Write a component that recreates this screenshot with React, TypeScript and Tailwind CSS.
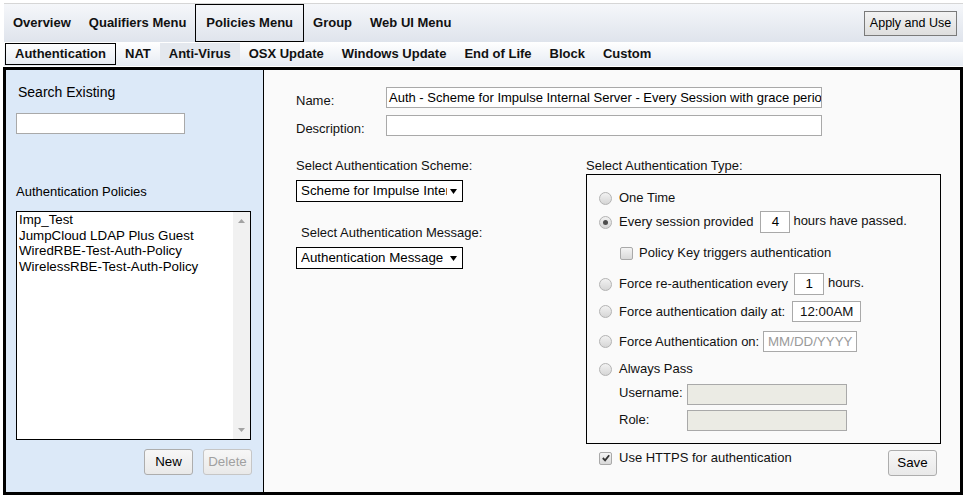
const topMenu = [
  { label: "Overview" },
  { label: "Qualifiers Menu" },
  { label: "Policies Menu", active: true },
  { label: "Group" },
  { label: "Web UI Menu" },
];

const subMenu = [
  { label: "Authentication", active: true },
  { label: "NAT" },
  { label: "Anti-Virus", hover: true },
  { label: "OSX Update" },
  { label: "Windows Update" },
  { label: "End of Life" },
  { label: "Block" },
  { label: "Custom" },
];

const policies = [
  "Imp_Test",
  "JumpCloud LDAP Plus Guest",
  "WiredRBE-Test-Auth-Policy",
  "WirelessRBE-Test-Auth-Policy",
];

function Radio({ checked }: { checked?: boolean }) {
  return (
    <span className="ml-[12px] w-[13px] h-[13px] shrink-0 rounded-full border border-[#b3b3b3] bg-linear-to-b from-[#f2f2f2] to-[#d6d6d6] flex items-center justify-center">
      {checked && <span className="w-[5px] h-[5px] rounded-full bg-[#4d4d4d]" />}
    </span>
  );
}

function Check({ checked }: { checked?: boolean }) {
  return (
    <span className="w-[13px] h-[13px] shrink-0 rounded-[2px] border border-[#a9a9a9] bg-linear-to-b from-[#f4f4f4] to-[#d9d9d9] flex items-center justify-center">
      {checked && (
        <svg viewBox="0 0 11 11" className="w-[10px] h-[10px]">
          <path d="M2 5.5 L4.5 8 L9 2.5" stroke="#333" strokeWidth="2" fill="none" />
        </svg>
      )}
    </span>
  );
}

function Arrow() {
  return (
    <svg viewBox="0 0 7 5" className="w-[7px] h-[5px] shrink-0">
      <path d="M0 0 L7 0 L3.5 5 Z" fill="#000" />
    </svg>
  );
}

function Field({ w, children, muted }: { w: string; children?: React.ReactNode; muted?: boolean }) {
  return (
    <div
      className={`${w} h-[21px] border border-[#a9a9a9] bg-white text-[13.33px] leading-[19px] text-center ${muted ? "text-[#9a9a9a]" : ""}`}
    >
      {children}
    </div>
  );
}

function Btn({ children, disabled }: { children: React.ReactNode; disabled?: boolean }) {
  return (
    <div
      className={`w-[49px] h-[26px] rounded-[3px] border bg-linear-to-b from-[#f7f7f7] to-[#e9e9e9] flex items-center justify-center text-[13.33px] ${
        disabled ? "border-[#c6c6c6] text-[#a0a0a0]" : "border-[#adadad] text-black"
      }`}
    >
      {children}
    </div>
  );
}

export default function App() {
  return (
    <div className="w-[968px] h-[501px] bg-white overflow-hidden pt-[3px] font-['Liberation_Sans',Arial,sans-serif] text-[13px] text-black">
      {/* main menu */}
      <div className="ml-[4px] w-[959px] h-[39px] border-t border-[#d6d6d6] bg-linear-to-b from-[#f5f7fa] to-[#dfe4ec] flex">
        {topMenu.map((m) => (
          <div
            key={m.label}
            className={`flex items-center font-bold text-[#111] ${
              m.active ? "border border-black px-[10px]" : "px-[9px]"
            }`}
          >
            {m.label}
          </div>
        ))}
        <div className="ml-auto mr-[6px] self-center h-[25px] w-[93px] border border-[#7a7a7a] bg-linear-to-b from-[#f3f3f3] to-[#dedede] flex items-center justify-center text-[12.5px]">
          Apply and Use
        </div>
      </div>

      {/* sub menu */}
      <div className="ml-[4px] w-[959px] h-[24px] py-[1px] pl-[1px] bg-linear-to-b from-[#ffffff] to-[#e6ebf3] flex">
        {subMenu.map((m) => (
          <div
            key={m.label}
            className={`flex items-center px-[9px] font-bold text-[#111] ${
              m.active ? "border border-black" : ""
            } ${m.hover ? "bg-[#e4e8ee]" : ""}`}
          >
            {m.label}
          </div>
        ))}
      </div>

      {/* frame */}
      <div className="mt-[1px] ml-[3px] w-[960px] h-[428px] border-[3px] border-black flex">
        {/* left panel */}
        <div className="w-[258px] border-r border-black bg-[#dce9f8] flex flex-col">
          <div className="mt-[14px] pl-[12px] text-[14px] leading-[16px]">Search Existing</div>
          <div className="mt-[13px] ml-[10px] w-[169px] h-[21px] border border-[#a9a9a9] bg-white" />
          <div className="mt-[50px] pl-[10px] leading-[16px]">Authentication Policies</div>
          <div className="mt-[11px] ml-[10px] w-[235px] h-[229px] border border-black bg-white flex">
            <div className="flex-1 pl-[2px] text-[13.33px] leading-[15.6px]">
              {policies.map((p) => (
                <div key={p}>{p}</div>
              ))}
            </div>
            <div className="w-[17px] bg-[#f1f1f1] flex flex-col justify-between items-center py-[7px]">
              <svg viewBox="0 0 7 4" className="w-[7px] h-[4px]">
                <path d="M0 4 L7 4 L3.5 0 Z" fill="#a3a3a3" />
              </svg>
              <svg viewBox="0 0 7 4" className="w-[7px] h-[4px]">
                <path d="M0 0 L7 0 L3.5 4 Z" fill="#a3a3a3" />
              </svg>
            </div>
          </div>
          <div className="mt-[9px] pr-[11px] flex justify-end gap-[10px]">
            <Btn>New</Btn>
            <Btn disabled>Delete</Btn>
          </div>
        </div>

        {/* right panel */}
        <div className="flex-1 bg-[#fafafa] pl-[32px] pt-[17px] text-[#111]">
          <div className="flex items-start">
            <div className="w-[90px] h-[21px] pt-[6px] leading-[15px]">Name:</div>
            <div className="w-[436px] h-[21px] border border-[#a9a9a9] bg-white px-[2px] text-[13px] leading-[19px] overflow-hidden whitespace-nowrap text-black">
              Auth - Scheme for Impulse Internal Server - Every Session with grace period
            </div>
          </div>
          <div className="mt-[7px] flex items-start">
            <div className="w-[90px] h-[21px] pt-[6px] leading-[15px]">Description:</div>
            <div className="w-[436px] h-[21px] border border-[#a9a9a9] bg-white" />
          </div>

          <div className="mt-[22px] flex">
            {/* scheme / message */}
            <div className="w-[290px]">
              <div className="leading-[16px]">Select Authentication Scheme:</div>
              <div className="mt-[6px] w-[167px] h-[22px] border border-black bg-white flex items-center pl-[4px] text-[13.33px] text-black">
                <div className="w-[146px] overflow-hidden whitespace-nowrap">Scheme for Impulse Internal</div>
                <span className="ml-[3px]">
                  <Arrow />
                </span>
              </div>
              <div className="mt-[23px] pl-[5px] leading-[16px]">Select Authentication Message:</div>
              <div className="mt-[6px] w-[167px] h-[22px] border border-black bg-white flex items-center pl-[4px] text-[13.33px] text-black">
                <div className="w-[146px] overflow-hidden whitespace-nowrap">Authentication Message</div>
                <span className="ml-[3px]">
                  <Arrow />
                </span>
              </div>
            </div>

            {/* type */}
            <div className="w-[355px]">
              <div className="leading-[16px]">Select Authentication Type:</div>
              <div className="w-[355px] h-[270px] border border-black flex flex-col">
                <div className="mt-[12px] h-[20px] flex items-center translate-y-[1px]">
                  <Radio />
                  <span className="ml-[7px]">One Time</span>
                </div>
                <div className="mt-[4px] h-[22px] flex items-center">
                  <Radio checked />
                  <span className="ml-[7px]">Every session provided</span>
                  <div className="ml-[7px] w-[30px] h-[22px] border border-[#a9a9a9] bg-white text-center text-[13.33px] leading-[20px] text-black">
                    4
                  </div>
                  <span className="ml-[3px] self-start leading-[20px]">hours have passed.</span>
                </div>
                <div className="mt-[10px] h-[20px] pl-[33px] flex items-center">
                  <Check />
                  <span className="ml-[6px]">Policy Key triggers authentication</span>
                </div>
                <div className="mt-[10px] h-[22px] flex items-center">
                  <Radio />
                  <span className="ml-[7px]">Force re-authentication every</span>
                  <div className="ml-[6px] w-[30px] h-[22px] border border-[#a9a9a9] bg-white text-center text-[13.33px] leading-[20px] text-black">
                    1
                  </div>
                  <span className="ml-[4px] self-start leading-[20px]">hours.</span>
                </div>
                <div className="mt-[6px] h-[21px] flex items-center">
                  <Radio />
                  <span className="ml-[7px]">Force authentication daily at:</span>
                  <div className="ml-[7px]">
                    <Field w="w-[69px]">12:00AM</Field>
                  </div>
                </div>
                <div className="mt-[9px] h-[21px] flex items-center">
                  <Radio />
                  <span className="ml-[7px]">Force Authentication on:</span>
                  <div className="ml-[4px]">
                    <Field w="w-[94px]" muted>
                      MM/DD/YYYY
                    </Field>
                  </div>
                </div>
                <div className="mt-[7px] h-[20px] flex items-center">
                  <Radio />
                  <span className="ml-[7px]">Always Pass</span>
                </div>
                <div className="mt-[5px] h-[21px] pl-[32px] flex items-center">
                  <span className="w-[68px] -translate-y-[2px]">Username:</span>
                  <div className="w-[160px] h-[21px] border border-[#a9a9a9] bg-[#ebebe4]" />
                </div>
                <div className="mt-[5px] h-[21px] pl-[32px] flex items-center">
                  <span className="w-[68px] -translate-y-[1px]">Role:</span>
                  <div className="w-[160px] h-[21px] border border-[#a9a9a9] bg-[#ebebe4]" />
                </div>
              </div>
              <div className="mt-[6px] flex items-start">
                <div className="ml-[13px] h-[16px] flex items-center">
                  <Check checked />
                </div>
                <span className="ml-[7px] leading-[16px]">Use HTTPS for authentication</span>
                <div className="ml-auto mr-[4px]">
                  <Btn>Save</Btn>
                </div>
              </div>
            </div>
          </div>
        </div>
      </div>
    </div>
  );
}
